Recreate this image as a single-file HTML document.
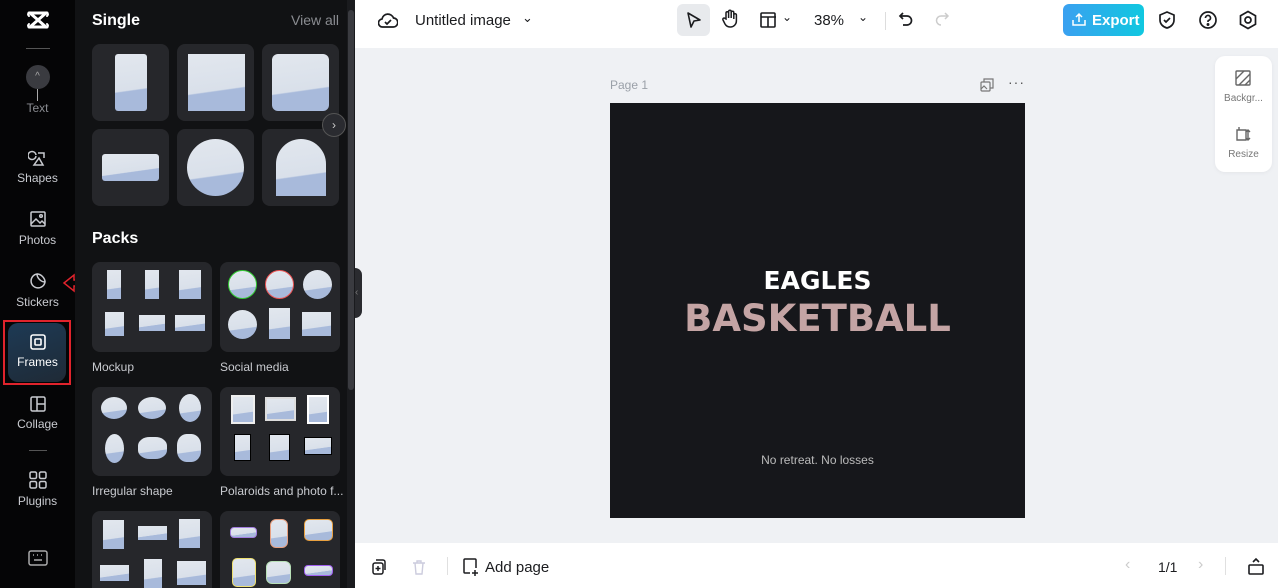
<!DOCTYPE html>
<html><head><meta charset="utf-8"><style>
*{box-sizing:border-box;margin:0;padding:0}
html,body{width:1278px;height:588px;overflow:hidden}
body{font-family:"Liberation Sans",sans-serif;background:#eff1f4;position:relative}
.nav{position:absolute;left:0;top:0;width:75px;height:588px;background:#050506;overflow:hidden}
.ni{position:absolute;left:0;width:75px;text-align:center;color:#c9cbd0;font-size:12px}
.ni svg{display:block;margin:0 auto 4px}
.panel{position:absolute;left:75px;top:0;width:280px;height:588px;background:#111214;color:#fff;overflow:hidden}
.h{position:absolute;font-weight:bold;font-size:16px;color:#fff}
.card{position:absolute;background:#26272b;border-radius:8px}
.img{position:absolute;background:linear-gradient(172deg,#e2e7ee 0%,#d9e0ea 62%,#a8badb 64%,#a8badb 100%)}
.lbl{position:absolute;font-size:12px;color:#c9cbd0}
.top{position:absolute;left:355px;top:0;width:923px;height:48px;background:#fff}
.bot{position:absolute;left:355px;top:543px;width:923px;height:45px;background:#fff}
.t{position:absolute;color:#1b1c1f;font-size:14px}
</style></head><body>
<div class="nav">
 <div class="ni" style="top:8px">
  <svg width="26" height="24" viewBox="0 0 26 24" fill="none" stroke="#fff" stroke-width="3" stroke-linecap="round"><path d="M4 5h18M4 19h18M5 5l16 14M21 5L5 19"/><path d="M4 5q-2 1 0 3M22 5q2 1 0 3M4 19q-2-1 0-3M22 19q2-1 0-3" stroke-width="2"/></svg></div>
 <div style="position:absolute;left:26px;top:48px;width:24px;height:1px;background:#555"></div>
 <div class="ni" style="top:65px"><div style="width:24px;height:24px;border-radius:50%;background:#3a3b40;margin:0 auto;color:#aaa;font-size:10px;line-height:24px">^</div><div style="width:1px;height:12px;background:#aaa;margin:0 auto"></div><div style="color:#8a8c91;margin-top:0">Text</div></div>
 <div class="ni" style="top:147px"><svg width="20" height="20" viewBox="0 0 20 20" fill="none" stroke="#c9cbd0" stroke-width="1.5"><path d="M8 9a4 4 0 1 1 0-1M10 6l6 0 0 5M11 11l4 7H6z"/></svg>Shapes</div>
 <div class="ni" style="top:209px"><svg width="20" height="20" viewBox="0 0 20 20" fill="none" stroke="#c9cbd0" stroke-width="1.5"><rect x="3" y="3" width="14" height="14" rx="1"/><path d="M3 15l5-5 4 4 2-2 3 3"/><circle cx="13" cy="7" r="1.3"/></svg>Photos</div>
 <div class="ni" style="top:271px"><svg width="20" height="20" viewBox="0 0 20 20" fill="none" stroke="#c9cbd0" stroke-width="1.5"><path d="M17 11A7 7 0 1 1 9 3c0 4 4 8 8 8zM9 3c4 0 8 4 8 8"/></svg>Stickers</div>
 <div style="position:absolute;left:3px;top:320px;width:68px;height:65px;border:2px solid #e0232c"></div>
 <div style="position:absolute;left:8px;top:323px;width:58px;height:59px;border-radius:10px;background:linear-gradient(160deg,#1d3a55,#1f2a36)"></div>
 <div class="ni" style="top:333px;color:#fff"><svg width="18" height="18" viewBox="0 0 18 18" fill="none" stroke="#fff" stroke-width="1.6"><rect x="2" y="2" width="14" height="14" rx="2"/><rect x="6" y="6" width="6" height="6" rx="1"/></svg>Frames</div>
 <div class="ni" style="top:395px"><svg width="18" height="18" viewBox="0 0 18 18" fill="none" stroke="#c9cbd0" stroke-width="1.5"><rect x="2" y="2" width="14" height="14" rx="1.5"/><path d="M8 2v14M8 9h8"/></svg>Collage</div>
 <div style="position:absolute;left:29px;top:450px;width:18px;height:1px;background:#555"></div>
 <div class="ni" style="top:470px"><svg width="20" height="20" viewBox="0 0 20 20" fill="none" stroke="#c9cbd0" stroke-width="1.5"><rect x="2" y="2" width="6.5" height="6.5" rx="1.5"/><rect x="11.5" y="2" width="6.5" height="6.5" rx="1.5"/><rect x="2" y="11.5" width="6.5" height="6.5" rx="1.5"/><rect x="11.5" y="11.5" width="6.5" height="6.5" rx="1.5"/></svg>Plugins</div>
 <div class="ni" style="top:550px"><svg width="20" height="16" viewBox="0 0 20 16" fill="none" stroke="#aaa" stroke-width="1.5"><rect x="1" y="1" width="18" height="14" rx="2"/><path d="M5 5h1M9 5h1M13 5h1M6 10h8"/></svg></div>
</div>
<svg style="position:absolute;left:62px;top:273px" width="30" height="20" viewBox="0 0 30 20"><path d="M2 10l10-8v5h16v6H12v5z" fill="none" stroke="#e0232c" stroke-width="1.5"/></svg>
<div class="panel">
 <div class="h" style="left:17px;top:12px">Single</div>
 <div style="position:absolute;left:216px;top:12px;color:#8a8c91;font-size:14px">View all</div>
 <div class="card" style="left:17px;top:44px;width:77px;height:77px"><div class="img" style="left:23px;top:10px;width:32px;height:57px;border-radius:3px"></div></div>
 <div class="card" style="left:102px;top:44px;width:77px;height:77px"><div class="img" style="left:11px;top:10px;width:57px;height:57px"></div></div>
 <div class="card" style="left:187px;top:44px;width:77px;height:77px"><div class="img" style="left:10px;top:10px;width:57px;height:57px;border-radius:6px"></div></div>
 <div class="card" style="left:17px;top:129px;width:77px;height:77px"><div class="img" style="left:10px;top:25px;width:57px;height:27px;border-radius:3px"></div></div>
 <div class="card" style="left:102px;top:129px;width:77px;height:77px"><div class="img" style="left:10px;top:10px;width:57px;height:57px;border-radius:50%"></div></div>
 <div class="card" style="left:187px;top:129px;width:77px;height:77px"><div class="img" style="left:14px;top:10px;width:50px;height:57px;border-radius:25px 25px 0 0"></div></div>
 <div style="position:absolute;left:247px;top:113px;width:24px;height:24px;border-radius:50%;background:#2a2b30;border:1px solid #555;color:#ccc;font-size:12px;text-align:center;line-height:22px">›</div>
 <div class="h" style="left:17px;top:230px">Packs</div>
 <div class="card" style="left:17px;top:262px;width:120px;height:90px">
  <div class="img" style="left:15px;top:8px;width:14px;height:29px"></div><div class="img" style="left:53px;top:8px;width:14px;height:29px"></div><div class="img" style="left:87px;top:8px;width:22px;height:29px"></div>
  <div class="img" style="left:13px;top:50px;width:19px;height:24px"></div><div class="img" style="left:47px;top:53px;width:26px;height:16px"></div><div class="img" style="left:83px;top:53px;width:30px;height:16px"></div></div>
 <div class="lbl" style="left:17px;top:360px">Mockup</div>
 <div class="card" style="left:145px;top:262px;width:120px;height:90px">
  <div class="img" style="left:8px;top:8px;width:29px;height:29px;border-radius:50%;border:1px solid #3c3"></div><div class="img" style="left:45px;top:8px;width:29px;height:29px;border-radius:50%;border:1px solid #e55"></div><div class="img" style="left:83px;top:8px;width:29px;height:29px;border-radius:50%"></div>
  <div class="img" style="left:8px;top:48px;width:29px;height:29px;border-radius:50%"></div><div class="img" style="left:49px;top:46px;width:21px;height:31px"></div><div class="img" style="left:82px;top:50px;width:29px;height:24px"></div></div>
 <div class="lbl" style="left:145px;top:360px">Social media</div>
 <div class="card" style="left:17px;top:387px;width:120px;height:89px">
  <div class="img" style="left:9px;top:10px;width:26px;height:22px;border-radius:50%"></div><div class="img" style="left:46px;top:10px;width:28px;height:22px;border-radius:50%"></div><div class="img" style="left:87px;top:7px;width:22px;height:28px;border-radius:50%"></div>
  <div class="img" style="left:13px;top:47px;width:19px;height:29px;border-radius:50%"></div><div class="img" style="left:46px;top:50px;width:29px;height:22px;border-radius:40%"></div><div class="img" style="left:85px;top:47px;width:24px;height:28px;border-radius:40%"></div></div>
 <div class="lbl" style="left:17px;top:484px">Irregular shape</div>
 <div class="card" style="left:145px;top:387px;width:120px;height:89px">
  <div class="img" style="left:11px;top:8px;width:24px;height:29px;border:2px solid #eee"></div><div class="img" style="left:45px;top:10px;width:31px;height:24px;border:2px solid #ddd"></div><div class="img" style="left:87px;top:8px;width:22px;height:29px;border:2px solid #fff"></div>
  <div class="img" style="left:14px;top:47px;width:17px;height:27px;border:1px solid #000"></div><div class="img" style="left:49px;top:47px;width:21px;height:27px;border:1px solid #000"></div><div class="img" style="left:84px;top:50px;width:28px;height:18px;border:1px solid #000"></div></div>
 <div class="lbl" style="left:145px;top:484px">Polaroids and photo f...</div>
 <div class="card" style="left:17px;top:511px;width:120px;height:90px">
  <div class="img" style="left:11px;top:9px;width:21px;height:29px"></div><div class="img" style="left:46px;top:15px;width:29px;height:14px"></div><div class="img" style="left:87px;top:8px;width:21px;height:29px"></div>
  <div class="img" style="left:8px;top:54px;width:29px;height:16px"></div><div class="img" style="left:52px;top:48px;width:18px;height:30px"></div><div class="img" style="left:85px;top:50px;width:29px;height:24px"></div></div>
 <div class="card" style="left:145px;top:511px;width:120px;height:90px">
  <div class="img" style="left:10px;top:16px;width:27px;height:11px;border:1.5px solid #a37ee0;border-radius:4px"></div><div class="img" style="left:50px;top:8px;width:18px;height:29px;border:1.5px solid #e8a080;border-radius:6px"></div><div class="img" style="left:84px;top:8px;width:29px;height:22px;border:1.5px solid #e8a040;border-radius:5px"></div>
  <div class="img" style="left:12px;top:47px;width:24px;height:29px;border:1.5px solid #eee070;border-radius:5px"></div><div class="img" style="left:46px;top:50px;width:25px;height:23px;border:1.5px solid #b8e0b8;border-radius:6px"></div><div class="img" style="left:84px;top:54px;width:29px;height:11px;border:1.5px solid #a060f0;border-radius:4px"></div></div>
 <div style="position:absolute;left:272px;top:0;width:8px;height:588px;background:#1a1b1e"></div>
 <div style="position:absolute;left:273px;top:10px;width:6px;height:380px;border-radius:3px;background:#3a3b40"></div>
</div>
<div style="position:absolute;left:355px;top:268px;width:7px;height:50px;background:#2a2b2f;border-radius:0 8px 8px 0;color:#777;font-size:10px;line-height:50px">‹</div>
<div class="top">
 <svg style="position:absolute;left:23px;top:11px" width="20" height="18" viewBox="0 0 20 18" fill="none" stroke="#1b1c1f" stroke-width="1.7"><path d="M5 16a4 4 0 0 1-1-8 6 6 0 0 1 11.5-1A4.5 4.5 0 0 1 15 16z"/><path d="M7 11l2 2 4-4"/></svg>
 <div class="t" style="left:60px;top:12px;font-size:15px">Untitled image</div>
 <div class="t" style="left:167px;top:10px;font-size:13px">⌄</div>
 <div style="position:absolute;left:322px;top:4px;width:33px;height:32px;border-radius:6px;background:#e8eaed"></div>
 <svg style="position:absolute;left:331px;top:11px" width="16" height="18" viewBox="0 0 16 18"><path d="M2 2l12 7-6 1-3 6z" fill="none" stroke="#1b1c1f" stroke-width="1.6" stroke-linejoin="round"/></svg>
 <svg style="position:absolute;left:366px;top:9px" width="18" height="20" viewBox="0 0 18 20" fill="none" stroke="#1b1c1f" stroke-width="1.5"><path d="M5 10V4a1.3 1.3 0 0 1 2.6 0v5V2.5a1.3 1.3 0 0 1 2.6 0V9V3.5a1.3 1.3 0 0 1 2.6 0V10V6a1.3 1.3 0 0 1 2.6 0v6a6 6 0 0 1-6 6H9a6 6 0 0 1-5-3l-2-4a1.3 1.3 0 0 1 2.3-1.3z"/></svg>
 <svg style="position:absolute;left:405px;top:12px" width="16" height="16" viewBox="0 0 16 16" fill="none" stroke="#1b1c1f" stroke-width="1.6"><rect x="1" y="1" width="14" height="14" rx="1"/><path d="M1 5h15M8 5v10"/></svg>
 <div class="t" style="left:427px;top:10px;font-size:12px">⌄</div>
 <div class="t" style="left:459px;top:12px;font-size:15px">38%</div>
 <div class="t" style="left:503px;top:10px;font-size:12px">⌄</div>
 <div style="position:absolute;left:530px;top:12px;width:1px;height:18px;background:#ddd"></div>
 <svg style="position:absolute;left:543px;top:11px" width="16" height="16" viewBox="0 0 16 16" fill="none" stroke="#1b1c1f" stroke-width="1.7"><path d="M5 2L2 5l3 3M2 5h7a4.5 4.5 0 0 1 0 9H5"/></svg>
 <svg style="position:absolute;left:579px;top:11px" width="16" height="16" viewBox="0 0 16 16" fill="none" stroke="#ccc" stroke-width="1.5"><path d="M11 2l3 3-3 3M14 5H7a4.5 4.5 0 0 0 0 9"/></svg>
 <div style="position:absolute;left:708px;top:4px;width:81px;height:32px;border-radius:6px;background:linear-gradient(90deg,#3aa0f0,#10c8e0);color:#fff;font-weight:bold;font-size:15px;line-height:33px;padding-left:29px">Export</div>
 <svg style="position:absolute;left:717px;top:12px" width="14" height="15" viewBox="0 0 14 15" fill="none" stroke="#fff" stroke-width="1.5"><path d="M7 10V2M4 5l3-3 3 3M1 8v5h12V8"/></svg>
 <svg style="position:absolute;left:803px;top:10px" width="18" height="20" viewBox="0 0 18 20" fill="none" stroke="#1b1c1f" stroke-width="1.7"><path d="M9 2l7 3v5c0 4-3 7-7 8-4-1-7-4-7-8V5z"/><path d="M6 10l2 2 4-4"/></svg>
 <svg style="position:absolute;left:843px;top:10px" width="20" height="20" viewBox="0 0 20 20" fill="none" stroke="#1b1c1f" stroke-width="1.7"><circle cx="10" cy="10" r="8"/><path d="M7.5 8a2.5 2.5 0 1 1 3 2.4c-.5.2-.5.6-.5 1.6"/><circle cx="10" cy="14.5" r=".6" fill="#1b1c1f"/></svg>
 <svg style="position:absolute;left:883px;top:10px" width="20" height="20" viewBox="0 0 20 20" fill="none" stroke="#1b1c1f" stroke-width="1.7"><path d="M10 1.5l7.5 4.3v8.4L10 18.5l-7.5-4.3V5.8z"/><circle cx="10" cy="10" r="3"/></svg>
</div>
<div style="position:absolute;left:610px;top:78px;color:#9aa0a8;font-size:12px">Page 1</div>
<svg style="position:absolute;left:980px;top:78px" width="14" height="14" viewBox="0 0 14 14" fill="none" stroke="#777" stroke-width="1.2"><rect x="1" y="4" width="9" height="9" rx="1"/><path d="M4 4V1h9v9h-3"/><path d="M1 11l3-3 3 3"/></svg>
<div style="position:absolute;left:1008px;top:74px;color:#555;font-size:14px;letter-spacing:1px">···</div>
<div style="position:absolute;left:610px;top:103px;width:415px;height:415px;background:#16171b">
 <div style="position:absolute;left:0;width:415px;top:163px;text-align:center;color:#fff;font-weight:900;font-size:25px;font-family:'DejaVu Sans','Liberation Sans',sans-serif">EAGLES</div>
 <div style="position:absolute;left:0;width:415px;top:194px;text-align:center;color:#c4a4a4;font-weight:900;font-size:37px;font-family:'DejaVu Sans','Liberation Sans',sans-serif;letter-spacing:0">BASKETBALL</div>
 <div style="position:absolute;left:0;width:415px;top:350px;text-align:center;color:#bbb;font-size:12px">No retreat. No losses</div>
</div>
<div style="position:absolute;left:1215px;top:56px;width:57px;height:116px;background:#fff;border-radius:10px;box-shadow:0 1px 4px rgba(0,0,0,.05)">
 <svg style="position:absolute;left:20px;top:14px" width="16" height="16" viewBox="0 0 16 16" fill="none" stroke="#666" stroke-width="1.4"><rect x="1" y="1" width="14" height="14" rx="1"/><path d="M1 9L9 1M4 15L15 4M10 15l5-5"/></svg>
 <div style="position:absolute;left:0;width:57px;top:37px;text-align:center;font-size:10px;color:#777">Backgr...</div>
 <svg style="position:absolute;left:20px;top:70px" width="16" height="16" viewBox="0 0 16 16" fill="none" stroke="#666" stroke-width="1.4"><path d="M2 4h9v10H2zM4 1v3M13 4v10M11 6l2-2 2 2M11 12l2 2 2-2"/></svg>
 <div style="position:absolute;left:0;width:57px;top:93px;text-align:center;font-size:10px;color:#777">Resize</div>
</div>
<div class="bot">
 <svg style="position:absolute;left:17px;top:16px" width="14" height="16" viewBox="0 0 14 16" fill="none" stroke="#1b1c1f" stroke-width="1.5"><rect x="1" y="4" width="10" height="11" rx="2"/><path d="M4 1h7a2 2 0 0 1 2 2v8M6 7v5M3.5 9.5h5"/></svg>
 <svg style="position:absolute;left:57px;top:16px" width="14" height="16" viewBox="0 0 14 16" fill="none" stroke="#ccd" stroke-width="1.4"><path d="M1 4h12M3 4l1 11h6l1-11M5 4V2h4v2"/></svg>
 <div style="position:absolute;left:92px;top:14px;width:1px;height:18px;background:#e0e0e0"></div>
 <svg style="position:absolute;left:107px;top:15px" width="18" height="18" viewBox="0 0 18 18" fill="none" stroke="#1b1c1f" stroke-width="1.5"><path d="M8 15H3a1 1 0 0 1-1-1V2a1 1 0 0 1 1-1h10a1 1 0 0 1 1 1v8M13 12v6M10 15h6"/></svg>
 <div class="t" style="left:130px;top:16px;font-size:15px">Add page</div>
 <div style="position:absolute;left:770px;top:13px;color:#ccc;font-size:16px">‹</div>
 <div class="t" style="left:803px;top:16px;font-size:14px">1/1</div>
 <div style="position:absolute;left:843px;top:13px;color:#ccc;font-size:16px">›</div>
 <div style="position:absolute;left:870px;top:14px;width:1px;height:18px;background:#e0e0e0"></div>
 <svg style="position:absolute;left:893px;top:14px" width="16" height="18" viewBox="0 0 16 18" fill="none" stroke="#1b1c1f" stroke-width="1.6"><rect x="1" y="8" width="14" height="9" rx="1"/><path d="M5 5l3-3 3 3"/></svg>
</div>
</body></html>
